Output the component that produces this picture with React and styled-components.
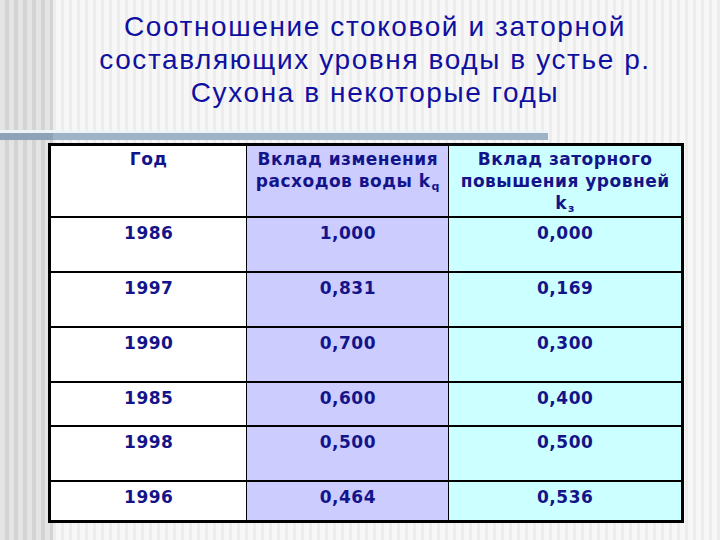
import React from 'react';
import styled, { createGlobalStyle } from 'styled-components';

const GlobalStyle = createGlobalStyle`
  html, body {
    margin: 0;
    padding: 0;
  }
  body {
    width: 720px;
    height: 540px;
    overflow: hidden;
    background:
      repeating-linear-gradient(90deg, #e4e4e4 0 5px, #d3d3d3 5px 9px) 0 0 / 53px 100% no-repeat,
      repeating-linear-gradient(90deg, #f7f7f7 0 5px, #ededed 5px 8px);
  }
`;

const Slide = styled.div`
  width: 720px;
  height: 540px;
  display: flex;
  flex-direction: column;
`;

const Title = styled.h1`
  margin: 0;
  padding: 10px 0 0 30px;
  text-align: center;
  font-family: "Liberation Sans", Arial, sans-serif;
  font-weight: normal;
  font-size: 28px;
  line-height: 33px;
  letter-spacing: 1.6px;
  color: #1010a0;
`;

const Rule = styled.div`
  margin-top: 21px;
  width: 548px;
  height: 7px;
  border-top: 3px solid #eef3f8;
  background: linear-gradient(90deg, #8ea3b8 0 53px, #9fb3c6 53px);
`;

const Table = styled.table`
  margin: 3px 0 0 48px;
  width: 636px;
  border-collapse: collapse;
  border: 3px solid #000;
  font-family: "DejaVu Sans", Verdana, sans-serif;
  font-weight: bold;
  font-size: 17px;
  letter-spacing: 0.5px;
  color: #14148a;
`;

const Row = styled.tr`
  height: ${p => p.$h}px;
  border-top: 2px solid #000;
`;

const bg = { plain: '#ffffff', flow: '#ccccff', jam: '#ccffff' };

const Cell = styled.td`
  background: ${p => bg[p.$kind]};
  width: ${p => p.$w}px;
  padding: ${p => (p.$head ? 2 : 4)}px 4px 0;
  vertical-align: top;
  text-align: center;
  line-height: 22px;
  border-left: 1px solid #000;
  &:first-child {
    border-left: none;
  }
  sub {
    font-size: 11px;
    margin-left: 1px;
    vertical-align: -3px;
    line-height: 0;
  }
`;

const rows = [
  ['1986', '1,000', '0,000', 55],
  ['1997', '0,831', '0,169', 55],
  ['1990', '0,700', '0,300', 55],
  ['1985', '0,600', '0,400', 44],
  ['1998', '0,500', '0,500', 55],
  ['1996', '0,464', '0,536', 41],
];

export default function App() {
  return (
    <>
      <GlobalStyle />
      <Slide>
        <Title>
          Соотношение стоковой и заторной
          <br />
          составляющих уровня воды в устье р.
          <br />
          Сухона в некоторые годы
        </Title>
        <Rule />
        <Table>
          <tbody>
            <Row $h={72}>
              <Cell $kind="plain" $w={201} $head>Год</Cell>
              <Cell $kind="flow" $w={201} $head>
                Вклад изменения расходов воды k<sub>q</sub>
              </Cell>
              <Cell $kind="jam" $w={234} $head>
                Вклад заторного повышения уровней k<sub>з</sub>
              </Cell>
            </Row>
            {rows.map(([year, kq, kz, h]) => (
              <Row key={year} $h={h}>
                <Cell $kind="plain">{year}</Cell>
                <Cell $kind="flow">{kq}</Cell>
                <Cell $kind="jam">{kz}</Cell>
              </Row>
            ))}
          </tbody>
        </Table>
      </Slide>
    </>
  );
}
